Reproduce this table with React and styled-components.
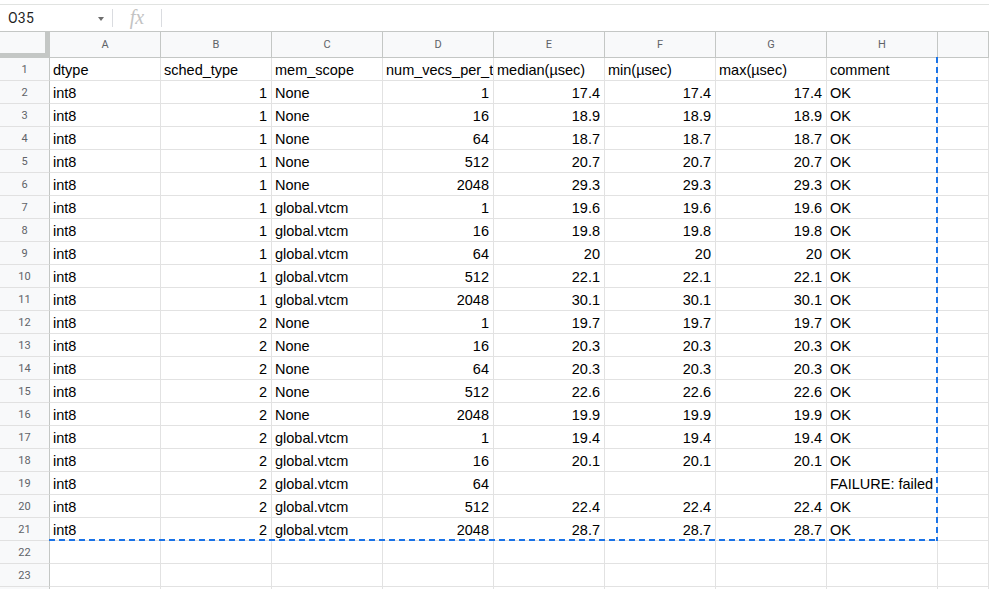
import React from 'react'
import styled, { createGlobalStyle } from 'styled-components'

const GlobalStyle = createGlobalStyle`
    html, body {
        margin: 0;
        padding: 0;
        background: #fff;
        overflow: hidden;
    }
    * { box-sizing: border-box; }
`

const COLS = ['A', 'B', 'C', 'D', 'E', 'F', 'G', 'H']
const ROW_H = 23
const COL_W = 111
const HEAD_W = 50

const rows = [
    ['dtype', 'sched_type', 'mem_scope', 'num_vecs_per_tensor', 'median(µsec)', 'min(µsec)', 'max(µsec)', 'comment'],
    ['int8', 1, 'None', 1, 17.4, 17.4, 17.4, 'OK'],
    ['int8', 1, 'None', 16, 18.9, 18.9, 18.9, 'OK'],
    ['int8', 1, 'None', 64, 18.7, 18.7, 18.7, 'OK'],
    ['int8', 1, 'None', 512, 20.7, 20.7, 20.7, 'OK'],
    ['int8', 1, 'None', 2048, 29.3, 29.3, 29.3, 'OK'],
    ['int8', 1, 'global.vtcm', 1, 19.6, 19.6, 19.6, 'OK'],
    ['int8', 1, 'global.vtcm', 16, 19.8, 19.8, 19.8, 'OK'],
    ['int8', 1, 'global.vtcm', 64, 20, 20, 20, 'OK'],
    ['int8', 1, 'global.vtcm', 512, 22.1, 22.1, 22.1, 'OK'],
    ['int8', 1, 'global.vtcm', 2048, 30.1, 30.1, 30.1, 'OK'],
    ['int8', 2, 'None', 1, 19.7, 19.7, 19.7, 'OK'],
    ['int8', 2, 'None', 16, 20.3, 20.3, 20.3, 'OK'],
    ['int8', 2, 'None', 64, 20.3, 20.3, 20.3, 'OK'],
    ['int8', 2, 'None', 512, 22.6, 22.6, 22.6, 'OK'],
    ['int8', 2, 'None', 2048, 19.9, 19.9, 19.9, 'OK'],
    ['int8', 2, 'global.vtcm', 1, 19.4, 19.4, 19.4, 'OK'],
    ['int8', 2, 'global.vtcm', 16, 20.1, 20.1, 20.1, 'OK'],
    ['int8', 2, 'global.vtcm', 64, '', '', '', 'FAILURE: failed'],
    ['int8', 2, 'global.vtcm', 512, 22.4, 22.4, 22.4, 'OK'],
    ['int8', 2, 'global.vtcm', 2048, 28.7, 28.7, 28.7, 'OK'],
    ['', '', '', '', '', '', '', ''],
    ['', '', '', '', '', '', '', ''],
    ['', '', '', '', '', '', '', ''],
]

const Page = styled.div`
    width: 989px;
    height: 589px;
    overflow: hidden;
    font-family: Roboto, "Liberation Sans", Arial, sans-serif;
`

const FormulaBar = styled.div`
    margin-top: 4px;
    height: 28px;
    border-top: 1px solid #e1e3e1;
    border-bottom: 1px solid #c4c7c5;
    display: flex;
    align-items: center;
`

const NameBox = styled.div`
    width: 112px;
    height: 100%;
    display: flex;
    align-items: center;
    justify-content: space-between;
    padding: 0 8px 0 8px;
    font-size: 14px;
    color: #1f1f1f;
    letter-spacing: 0.2px;
`

const Caret = styled.span`
    width: 0;
    height: 0;
    border-left: 3.5px solid transparent;
    border-right: 3.5px solid transparent;
    border-top: 4px solid #6d6d6d;
    margin-top: 2px;
`

const Divider = styled.div`
    width: 1px;
    height: 18px;
    background: #dadce0;
`

const Fx = styled.div`
    width: 48px;
    text-align: center;
    font-family: "Liberation Serif", "DejaVu Serif", serif;
    font-style: italic;
    font-size: 20px;
    color: #c3c3c3;
    margin-top: -2px;
`

const Sheet = styled.div`
    position: relative;
    display: grid;
    grid-template-columns: ${HEAD_W}px repeat(${COLS.length}, ${COL_W}px) 1fr;
    grid-auto-rows: ${ROW_H}px;
    grid-template-rows: 26px;
`

const Corner = styled.div`
    background: #f8f9fa;
    border-right: 5px solid #c4c7c5;
    border-bottom: 5px solid #c4c7c5;
`

const ColHead = styled.div`
    background: #f8f9fa;
    border-right: 1px solid #c4c7c5;
    border-bottom: 1px solid #c4c7c5;
    display: flex;
    align-items: center;
    justify-content: center;
    font-size: 11px;
    color: #5f6368;
`

const RowHead = styled.div`
    background: #f8f9fa;
    border-right: 1px solid #c4c7c5;
    border-bottom: 1px solid #e1e1e1;
    display: flex;
    align-items: center;
    justify-content: center;
    font-size: 11px;
    color: #5f6368;
`

const Cell = styled.div`
    border-right: 1px solid #e2e2e2;
    border-bottom: 1px solid #e2e2e2;
    padding: 2px 4px 0 3px;
    display: flex;
    align-items: center;
    justify-content: ${({ $num }) => ($num ? 'flex-end' : 'flex-start')};
    font-family: "Liberation Sans", Arial, sans-serif;
    font-size: 14.5px;
    color: #000;
    white-space: nowrap;
    overflow: hidden;
`

const CopyRange = styled.div`
    position: absolute;
    pointer-events: none;
    left: ${HEAD_W - 1}px;
    top: 25px;
    width: ${COLS.length * COL_W + 1}px;
    height: ${ROW_H * 21 + 1}px;
    background-image:
        repeating-linear-gradient(to bottom, #1a73e8 0 6px, transparent 6px 10px),
        repeating-linear-gradient(to right, #1a73e8 0 6px, transparent 6px 10px);
    background-size: 2px 100%, 100% 2px;
    background-position: right top, left bottom;
    background-repeat: no-repeat;
`

export default function App() {
    return (
        <Page>
            <GlobalStyle />
            <FormulaBar>
                <NameBox>
                    O35
                    <Caret />
                </NameBox>
                <Divider />
                <Fx>fx</Fx>
                <Divider />
            </FormulaBar>
            <Sheet>
                <Corner />
                {COLS.map(c => <ColHead key={c}>{c}</ColHead>)}
                <ColHead />
                {rows.map((r, i) => (
                    <React.Fragment key={i}>
                        <RowHead>{i + 1}</RowHead>
                        {r.map((v, j) => (
                            <Cell key={j} $num={typeof v === 'number'}>{v}</Cell>
                        ))}
                        <Cell />
                    </React.Fragment>
                ))}
                <CopyRange />
            </Sheet>
        </Page>
    )
}
